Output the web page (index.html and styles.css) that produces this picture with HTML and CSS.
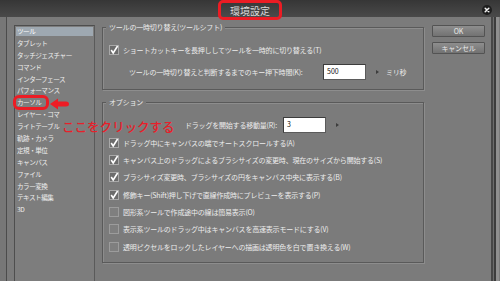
FILE: index.html
```html
<!DOCTYPE html>
<html lang="ja">
<head>
<meta charset="utf-8">
<title>環境設定</title>
<link rel="stylesheet" href="styles.css">
</head>
<body>
<div class="dialog">
  <div class="titlebar">
    <div class="tb-side"></div>
    <div class="title">環境設定</div>
    <div class="tb-side tb-right">
      <span class="close"><svg width="10" height="10" viewBox="0 0 10 10"><circle cx="5" cy="5" r="5" fill="#1e1e1e"/><path d="M3.2 3.2 L6.8 6.8 M6.8 3.2 L3.2 6.8" stroke="#f2f2f2" stroke-width="1.5" stroke-linecap="round"/></svg></span>
    </div>
  </div>
  <div class="main">
    <div class="edge-left"></div>
    <ul class="cats">
      <li class="cat selected">ツール</li>
      <li class="cat">タブレット</li>
      <li class="cat">タッチジェスチャー</li>
      <li class="cat">コマンド</li>
      <li class="cat">インターフェース</li>
      <li class="cat">パフォーマンス</li>
      <li class="cat"><span class="marked">カーソル</span></li>
      <li class="cat">レイヤー・コマ</li>
      <li class="cat">ライトテーブル</li>
      <li class="cat">軌跡・カメラ</li>
      <li class="cat">定規・単位</li>
      <li class="cat">キャンバス</li>
      <li class="cat">ファイル</li>
      <li class="cat">カラー変換</li>
      <li class="cat">テキスト編集</li>
      <li class="cat">3D</li>
    </ul>
    <div class="content">
      <fieldset class="group group-shift">
        <legend>ツールの一時切り替え(ツールシフト)</legend>
        <div class="check-row">
          <svg class="cb" width="10" height="10" viewBox="0 0 10 10"><rect x="0.5" y="0.5" width="9" height="9" fill="#6c6c6c" stroke="#a9a9a9"/><path d="M2.2 5 L4.2 8 L8.6 1" stroke="#ffffff" stroke-width="1.6" fill="none"/></svg>
          <span>ショートカットキーを長押ししてツールを一時的に切り替える(T)</span>
        </div>
        <div class="field-row field-shift">
          <span class="field-label label-shift">ツールの一時切り替えと判断するまでのキー押下時間(K):</span>
          <span class="input input-shift">500</span>
          <span class="spin"></span>
          <span class="unit">ミリ秒</span>
        </div>
      </fieldset>
      <fieldset class="group group-options">
        <legend>オプション</legend>
        <div class="field-row field-drag">
          <span class="field-label label-drag">ドラッグを開始する移動量(R):</span>
          <span class="input input-drag">3</span>
          <span class="spin"></span>
        </div>
        <div class="check-list">
          <div class="check-row">
            <svg class="cb" width="10" height="10" viewBox="0 0 10 10"><rect x="0.5" y="0.5" width="9" height="9" fill="#6c6c6c" stroke="#a9a9a9"/><path d="M2.2 5 L4.2 8 L8.6 1" stroke="#ffffff" stroke-width="1.6" fill="none"/></svg>
            <span>ドラッグ中にキャンバスの端でオートスクロールする(A)</span>
          </div>
          <div class="check-row">
            <svg class="cb" width="10" height="10" viewBox="0 0 10 10"><rect x="0.5" y="0.5" width="9" height="9" fill="#6c6c6c" stroke="#a9a9a9"/><path d="M2.2 5 L4.2 8 L8.6 1" stroke="#ffffff" stroke-width="1.6" fill="none"/></svg>
            <span>キャンバス上のドラッグによるブラシサイズの変更時、現在のサイズから開始する(S)</span>
          </div>
          <div class="check-row">
            <svg class="cb" width="10" height="10" viewBox="0 0 10 10"><rect x="0.5" y="0.5" width="9" height="9" fill="#6c6c6c" stroke="#a9a9a9"/><path d="M2.2 5 L4.2 8 L8.6 1" stroke="#ffffff" stroke-width="1.6" fill="none"/></svg>
            <span>ブラシサイズ変更時、ブラシサイズの円をキャンバス中央に表示する(B)</span>
          </div>
          <div class="check-row">
            <svg class="cb" width="10" height="10" viewBox="0 0 10 10"><rect x="0.5" y="0.5" width="9" height="9" fill="#6c6c6c" stroke="#a9a9a9"/><path d="M2.2 5 L4.2 8 L8.6 1" stroke="#ffffff" stroke-width="1.6" fill="none"/></svg>
            <span>修飾キー(Shift)押し下げで直線作成時にプレビューを表示する(P)</span>
          </div>
          <div class="check-row">
            <svg class="cb" width="10" height="10" viewBox="0 0 10 10"><rect x="0.5" y="0.5" width="9" height="9" fill="#7f7f7f" stroke="#9c9c9c"/></svg>
            <span>図形系ツールで作成途中の線は簡易表示(O)</span>
          </div>
          <div class="check-row">
            <svg class="cb" width="10" height="10" viewBox="0 0 10 10"><rect x="0.5" y="0.5" width="9" height="9" fill="#7f7f7f" stroke="#9c9c9c"/></svg>
            <span>表示系ツールのドラッグ中はキャンバスを高速表示モードにする(V)</span>
          </div>
          <div class="check-row">
            <svg class="cb" width="10" height="10" viewBox="0 0 10 10"><rect x="0.5" y="0.5" width="9" height="9" fill="#7f7f7f" stroke="#9c9c9c"/></svg>
            <span>透明ピクセルをロックしたレイヤーへの描画は透明色を白で置き換える(W)</span>
          </div>
        </div>
      </fieldset>
    </div>
    <div class="buttons">
      <div class="btn">OK</div>
      <div class="btn">キャンセル</div>
    </div>
    <div class="edge-right"></div>
  </div>
  <svg class="anno-arrow" width="20" height="12" viewBox="0 0 20 12"><path d="M0 6 L8 0.5 L8 3.5 L16 3.5 Q19 3.5 19 6 Q19 8.5 16 8.5 L8 8.5 L8 11.5 Z" fill="#ee1c25"/></svg>
  <div class="anno-text">ここをクリックする</div>
</div>
</body>
</html>
```

FILE: styles.css
```css
* { box-sizing: border-box; }

html, body {
  margin: 0;
  padding: 0;
}

body {
  width: 500px;
  height: 281px;
  overflow: hidden;
  background: #7b7b7b;
  font-family: "Noto Sans CJK JP", "Noto Sans", sans-serif;
  font-size: 7px;
  letter-spacing: -0.2px;
  color: #ececec;
}

.dialog {
  position: relative;
  width: 500px;
  height: 281px;
  overflow: hidden;
  background: #7b7b7b;
}

/* title bar */
.titlebar {
  height: 17px;
  display: grid;
  grid-template-columns: 1fr auto 1fr;
  background: linear-gradient(#363636, #4a4a4a);
}

.tb-right {
  display: flex;
  justify-content: flex-end;
  align-items: center;
  padding-right: 8px;
}

.close {
  display: flex;
  width: 10px;
  height: 10px;
}

.title {
  position: relative;
  z-index: 2;
  width: 64px;
  height: 20px;
  border: 3px solid #ec1c24;
  border-radius: 5px;
  display: flex;
  align-items: center;
  justify-content: center;
  font-size: 10px;
  line-height: 12px;
  letter-spacing: 0;
  color: #d9d9d9;
  padding-top: 1px;
}

/* main area */
.main {
  display: flex;
  height: 264px;
}

.edge-left {
  width: 7px;
  background: #777777;
  border-right: 1px solid #4c4c4c;
}

.cats {
  list-style: none;
  margin: 8px 0 -20px 7px;
  padding: 1px 1px 0 1px;
  width: 81px;
  background: #7d7d7d;
  border: 1px solid #4e4e4e;
  border-right-color: #5a5a5a;
}

.cat {
  height: 9px;
  line-height: 9px;
  margin-bottom: 2.9px;
  padding-left: 1px;
  white-space: nowrap;
  font-size: 6.6px;
  letter-spacing: -0.5px;
  color: #ededed;
}

.cat.selected {
  background: #9ea8b1;
  color: #ffffff;
}

.marked {
  display: inline-block;
  padding: 0 5px 0 1px;
  margin-left: -1px;
  border-radius: 3px;
  outline: 3px solid #ec1c24;
  outline-offset: 0;
}

.content {
  margin: 6px 0 0 7px;
  width: 322px;
}

.group {
  margin: 0;
  min-width: 0;
  border: 1px solid #5a5a5a;
  box-shadow: 1px 1px 0 #8d8d8d, inset 1px 1px 0 #8d8d8d;
}

.group legend {
  font-size: 7px;
  line-height: 9px;
  padding: 0 3px;
  margin-left: -3px;
  color: #ececec;
  background: #7b7b7b;
}

.group-shift {
  padding: 12px 6px 9px 6px;
}

.group-options {
  margin-top: 8px;
  padding: 10px 6px 9px 6px;
}

.check-row {
  display: flex;
  align-items: center;
  gap: 4px;
  height: 12px;
  white-space: nowrap;
}

.cb {
  flex: none;
  display: block;
}

.check-list {
  display: flex;
  flex-direction: column;
  gap: 5.4px;
  margin-top: 3.5px;
}

.field-row {
  display: flex;
  align-items: center;
  height: 16px;
  white-space: nowrap;
}

.field-shift {
  margin-top: 8px;
  padding-left: 20px;
}

.field-drag {
  padding-left: 76px;
}

.label-shift { flex: 0 0 194px; }
.label-drag { flex: 0 0 98px; }

.input {
  height: 16px;
  background: #ffffff;
  border: 1px solid #5b5b5b;
  border-top-color: #3c3c3c;
  border-left-color: #3c3c3c;
  color: #111111;
  padding: 1px 0 0 3px;
  line-height: 10px;
  letter-spacing: 0;
}

.input-shift { width: 43px; }
.input-drag { width: 43px; }

.spin {
  width: 0;
  height: 0;
  margin-left: 10px;
  border-left: 3px solid #3d3d3d;
  border-top: 2.5px solid transparent;
  border-bottom: 2.5px solid transparent;
}

.unit {
  margin-left: 7px;
}

/* buttons */
.buttons {
  margin: 8px 0 0 8px;
  width: 53px;
  display: flex;
  flex-direction: column;
  gap: 5px;
}

.btn {
  height: 12px;
  border: 1px solid #535353;
  border-radius: 1px;
  background: linear-gradient(#8e8e8e, #727272);
  color: #e9e9e9;
  text-align: center;
  line-height: 10px;
  font-size: 7px;
}

.edge-right {
  margin-left: 6px;
  width: 8px;
  border-left: 2px solid #474747;
  border-right: 3px solid #8f8f8f;
  background: linear-gradient(90deg, #6c6c6c 0 1px, #3c3c3c 1px 3px);
}

/* annotation overlays */
.anno-arrow {
  position: absolute;
  left: 50px;
  top: 98px;
}

.anno-text {
  position: absolute;
  left: 62px;
  top: 119px;
  font-size: 12.5px;
  font-weight: 500;
  line-height: 15px;
  letter-spacing: 0;
  color: #e8202a;
  white-space: nowrap;
}
```
